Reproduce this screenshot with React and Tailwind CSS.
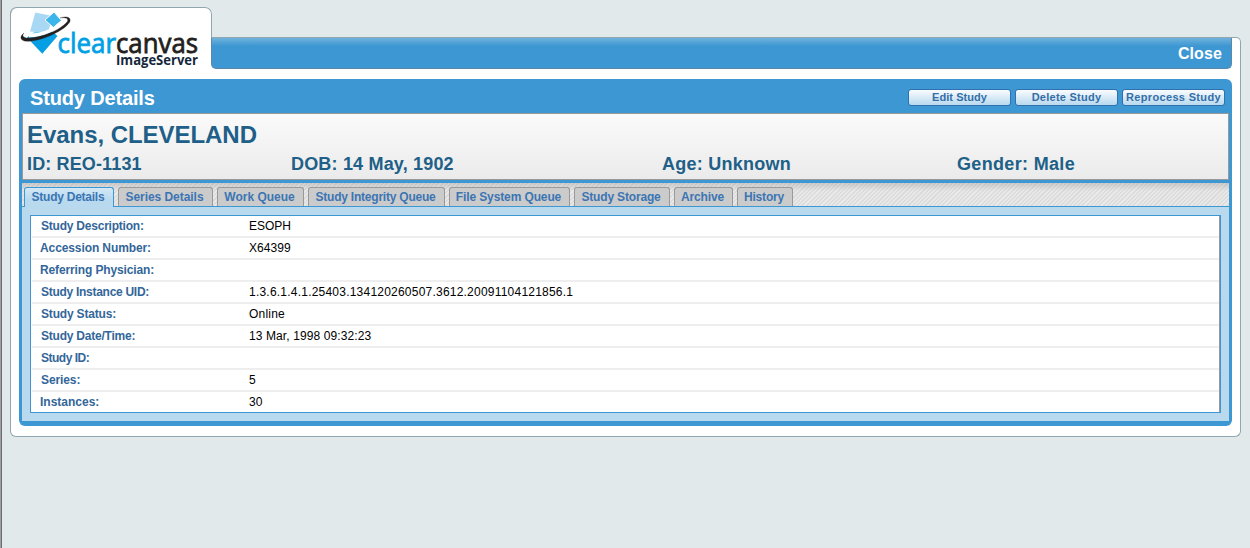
import React from "react";

function Logo() {
  return (
    <svg width="182" height="60" viewBox="20 10 182 60" className="mt-[2px] ml-[9px] block">
      <path d="M35.300 12.500L52.500 16L48 33L30 31.500Z" fill="#a9d8f4" />
      <path d="M54 12L61.500 20.500L53.300 27.500L45 20Z" fill="#3cb5ea" stroke="#fff" strokeWidth="1" />
      <path d="M27 37.500L34 32.500L53 32L57.500 36L42.300 53.700Z" fill="#069fe3" />
      <path d="M29 35.500C40 35.500 52 31 61 24.500" fill="none" stroke="#fff" strokeWidth="4" />
      <path d="M24 33C19 36.500 20 41.300 27 41.300C42 41.300 66 30 70 21.500C71 16.500 66 16 60 18C67 17 69 19 67 22C60 30.500 41 37.500 29 38C23 38 21.500 36 24 33Z" fill="#231f20" stroke="#231f20" strokeWidth=".3" />
      <text x="57.500" y="53" fontFamily="Open Sans" fontSize="28" fontWeight="400" fill="#00a1e4" stroke="#00a1e4" strokeWidth=".8" textLength="58.500" lengthAdjust="spacingAndGlyphs">clear</text>
      <text x="116" y="53" fontFamily="Open Sans" fontSize="28" fontWeight="400" fill="#231f20" stroke="#231f20" strokeWidth=".8" textLength="82" lengthAdjust="spacingAndGlyphs">canvas</text>
      <text x="116" y="65" fontFamily="Open Sans" fontSize="13.500" fontWeight="700" fill="#14283c" textLength="82" lengthAdjust="spacingAndGlyphs">ImageServer</text>
    </svg>
  );
}

const tabs = [
  ["Study Details", "w-[90px] tracking-[-0.25px]"],
  ["Series Details", "w-[95px] tracking-[-0.05px]"],
  ["Work Queue", "w-[87px]"],
  ["Study Integrity Queue", "w-[137px] tracking-[-0.22px]"],
  ["File System Queue", "w-[121px] tracking-[-0.12px]"],
  ["Study Storage", "w-[96px] tracking-[-0.17px]"],
  ["Archive", "w-[59px] tracking-[-0.15px]"],
  ["History", "w-[56px] tracking-[-0.2px]"],
];

const rows = [
  ["Study Description:", "pl-[9px] tracking-[-0.22px]", "ESOPH", ""],
  ["Accession Number:", "pl-[8px] tracking-[-0.1px]", "X64399", "tracking-[0.05px]"],
  ["Referring Physician:", "pl-[8px] tracking-[-0.13px]", "", ""],
  ["Study Instance UID:", "pl-[9px] tracking-[-0.28px]", "1.3.6.1.4.1.25403.134120260507.3612.20091104121856.1", "tracking-[0.22px]"],
  ["Study Status:", "pl-[9px] tracking-[-0.18px]", "Online", "tracking-[0.2px]"],
  ["Study Date/Time:", "pl-[9px] tracking-[-0.22px]", "13 Mar, 1998 09:32:23", "tracking-[0.1px]"],
  ["Study ID:", "pl-[9px] tracking-[-0.5px]", "", ""],
  ["Series:", "pl-[9px] tracking-[-0.1px]", "5", ""],
  ["Instances:", "pl-[8px]", "30", "tracking-[0.2px]"],
];

const actions = [
  ["Edit Study", "tracking-[0.05px]"],
  ["Delete Study", "tracking-[0.25px]"],
  ["Reprocess Study", "tracking-[0.33px]"],
];

export default function App() {
  return (
    <div className="h-[548px] w-[1250px] overflow-hidden border-l border-[#a0a0a4] bg-[#e2e9eb] font-['Liberation_Sans',Arial,sans-serif] whitespace-nowrap">
      <div className="h-full border-l border-[#6b6b70] pt-[7px] pl-[8px]">
        <div className="w-[1231px]">
          <header className="flex h-[62px]">
            <div className="h-[62px] w-[202px] rounded-t-[7px] border-l border-[#90a7b0] bg-white">
              <div className="-ml-px h-[31px] rounded-t-[7px] border-x border-t border-[#90a7b0]"><Logo /></div>
            </div>
            <div className="mt-[30px] h-[32px] flex-1 rounded-tr-[5px] border-t border-r border-[#90a7b0] bg-white pr-[8px]">
              <div className="-ml-px flex h-[31px] items-start justify-end rounded-b-[5px] border-x border-b border-[#5c87a8] bg-[linear-gradient(#70b2dc,#3d97d2_8px)] pr-[9px] text-white">
                <a className="mt-[5px] text-[16px] leading-[21px] font-bold tracking-[0.1px]">Close</a>
              </div>
            </div>
          </header>
          <main className="h-[368px] rounded-b-[6px] border-x border-b border-[#90a7b0] bg-white px-[8px] pt-[10px]">
            <section className="h-[347px] rounded-[6px] bg-[#3d97d2] px-[3px]">
              <div className="flex h-[34px] items-start justify-between pl-[8px] text-white">
                <h1 className="mt-[6px] text-[20px] leading-[27px] font-bold tracking-[-0.15px]">Study Details</h1>
                <div className="mt-[10px] mr-[4px] flex gap-[4px]">
                  {actions.map(([label, cls]) => (
                    <button key={label} className={`${cls} flex h-[17px] w-[103px] items-start justify-center rounded-[3px] border border-[#3070ae] bg-[linear-gradient(#fafcfe,#b8d9ee)] text-[11px] leading-[15px] font-bold text-[#336ea9]`}>
                      {label}
                    </button>
                  ))}
                </div>
              </div>
              <div className="h-[67px] border border-[#999] bg-[linear-gradient(#fafafa,#ebebeb)] pl-[4px] font-bold text-[#205f87]">
                <div className="h-[38px] pt-[5px] text-[24px] leading-[32px] tracking-[-0.05px]">Evans, CLEVELAND</div>
                <div className="flex h-[26px] text-[18px] leading-[24px]">
                  <div className="w-[264px] tracking-[0.14px]">ID: REO-1131</div>
                  <div className="w-[371px] tracking-[0.18px]">DOB: 14 May, 1902</div>
                  <div className="w-[295px] tracking-[0.25px]">Age: Unknown</div>
                  <div className="tracking-[0.33px]">Gender: Male</div>
                </div>
              </div>
              <div className="mt-[3px] h-[238px] bg-[#b8d9ee]">
                <nav className="flex h-[24px] items-end gap-[4px] border-b border-[#3d97d2] bg-[linear-gradient(rgba(120,120,120,.25),transparent_8px),repeating-linear-gradient(135deg,#dcdcdc_0,#dcdcdc_1.5px,#e9e9e9_1.5px,#e9e9e9_3px)] pl-[2px]">
                  {tabs.map(([label, cls], i) => (
                    <div key={label} className={`${cls} flex items-start justify-center rounded-t-[3px] border-x border-t pt-px pr-[2px] text-[12px] leading-[16px] font-bold text-[#3b75b3] ${i === 0 ? "-mb-px h-[20px] border-[#3d97d2] bg-[linear-gradient(#d3e8f5,#b8d9ee_12px)]" : "h-[19px] border-[#999] bg-[#cbcbcb]"}`}>
                      {label}
                    </div>
                  ))}
                </nav>
                <div className="px-[8px] pt-[8px]">
                  <div className="h-[198px] border border-[#3d97d2] bg-white px-px shadow-[inset_-1px_0_#999]">
                    {rows.map(([label, cls, value, valueCls], i) => (
                      <div key={label} className={`flex h-[22px] items-start pt-[2px] text-[12px] leading-[16px] ${i < 8 ? "border-b-2 border-[#eee]" : ""}`}>
                        <div className={`w-[217px] font-bold text-[#336699] ${cls}`}>{label}</div>
                        <div className={`text-black ${valueCls}`}>{value}</div>
                      </div>
                    ))}
                  </div>
                </div>
              </div>
            </section>
          </main>
        </div>
      </div>
    </div>
  );
}
